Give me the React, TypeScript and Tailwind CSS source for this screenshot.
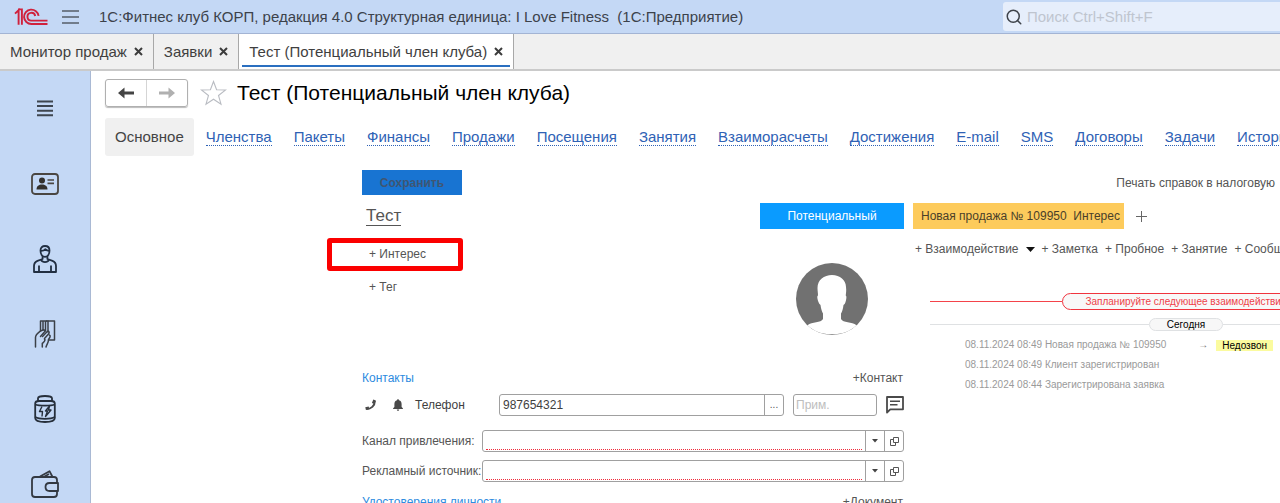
import type { ReactNode } from "react";
import { Search } from "lucide-react";

interface Tab {
  title: string;
  active?: boolean;
}

interface HistoryEntry {
  date: string;
  text: string;
  status?: string;
}

const tabs: Tab[] = [
  { title: "Монитор продаж" },
  { title: "Заявки" },
  { title: "Тест (Потенциальный член клуба)", active: true },
];

const links = [
  "Членства",
  "Пакеты",
  "Финансы",
  "Продажи",
  "Посещения",
  "Занятия",
  "Взаиморасчеты",
  "Достижения",
  "E-mail",
  "SMS",
  "Договоры",
  "Задачи",
  "История",
];

const actions = ["+ Заметка", "+ Пробное", "+ Занятие", "+ Сообщение"];

const history: HistoryEntry[] = [
  { date: "08.11.2024 08:49", text: "Новая продажа № 109950", status: "Недозвон" },
  { date: "08.11.2024 08:49", text: "Клиент зарегистрирован" },
  { date: "08.11.2024 08:44", text: "Зарегистрирована заявка" },
];

const Logo = () => (
  <svg width="34" height="18" viewBox="0 0 34 18" fill="none" stroke="#d0213c" strokeWidth="1.9">
    <path d="M1 5.6 4.6 2.2V16.8" />
    <path d="M4 1.4H7.9V16.8" />
    <path d="M24.6 7.8A7.3 7.2 0 1 0 17.4 16H33.5" />
    <path d="M21.2 8A3.9 3.9 0 1 0 17.4 12.6H33.5" />
  </svg>
);

const Cross = () => (
  <svg width="9" height="9" viewBox="0 0 9 9" stroke="#3c3c3c" strokeWidth="2">
    <path d="M1 1 8 8M8 1 1 8" />
  </svg>
);

const Arrow = ({ className }: { className: string }) => (
  <svg width="16" height="12" viewBox="0 0 16 12" className={className} fill="currentColor">
    <path d="M0 6 6.5 0.5V4.6H16V7.4H6.5V11.5Z" />
  </svg>
);

const Star = () => (
  <svg width="27" height="26" viewBox="0 0 27 26" fill="#fff" stroke="#b9bcc2" strokeWidth="1.1">
    <path d="M13.5 1.5 16.6 9.7 25.6 10 18.5 15.5 21 24.2 13.5 19.2 6 24.2 8.5 15.5 1.4 10 10.4 9.7Z" />
  </svg>
);

const sections: { label: string; icon: ReactNode }[] = [
  {
    label: "Меню разделов",
    icon: (
      <svg width="16" height="17" viewBox="0 0 16 17" stroke="#3f464f" strokeWidth="2">
        <path d="M0 1.5H16M0 6H16M0 10.7H16M0 15.3H16" />
      </svg>
    ),
  },
  {
    label: "Карточки",
    icon: (
      <svg width="28" height="22" viewBox="0 0 28 22" fill="none" stroke="#4a4642" strokeWidth="1.8">
        <rect x="1" y="1" width="26" height="20" rx="3" />
        <circle cx="11" cy="7.5" r="3" fill="#33302d" stroke="none" />
        <path d="M5.5 16.5C5.5 13 8 11.6 11 11.6S16.5 13 16.5 16.5Z" fill="#33302d" stroke="none" />
        <path d="M16.5 7H23M16.5 10.4H23" strokeWidth="1.6" />
      </svg>
    ),
  },
  {
    label: "Клиенты",
    icon: (
      <svg width="24" height="28" viewBox="0 0 24 28" fill="none" stroke="#222f42" strokeWidth="1.8" strokeLinejoin="round">
        <path d="M7.5 5.5C7.5 2.6 9.3 1 12 1S16.5 2.6 16.5 5.5C16.5 9 14.8 11.8 12 11.8S7.5 9 7.5 5.5Z" />
        <path d="M7.6 5.8C10 5.9 11.4 5.3 12.2 4.2C13.4 5.4 14.8 5.8 16.4 5.8" />
        <path d="M9.6 11V14L4.5 15.8C2 16.8 1 18.5 1 21V27H23V21C23 18.5 22 16.8 19.5 15.8L14.4 14V11" />
        <path d="M8 14.8C9.5 17.8 14.5 17.8 16 14.8M6 20.5V27M18 20.5V27" />
      </svg>
    ),
  },
  {
    label: "Продажи",
    icon: (
      <svg width="22" height="28" viewBox="0 0 22 28" fill="none" stroke="#3b4048" strokeWidth="1.5" strokeLinecap="round" strokeLinejoin="round">
        <path d="M12.5 1H20.5V20H15" />
        <path d="M6.5 1V11M9 1V10M11.5 1V11M14 1V12M6.5 1H12.5" />
        <path d="M1.5 27V17.5C1.5 14.5 3.5 13.3 6.5 11L9.5 9.8C11.5 9.8 11.2 11.6 10 12.5L6.5 16.5" />
        <path d="M8.5 16.5 13.5 11.3C15.5 11 15.5 13 14.5 14L10.5 18.5C12 21 10 22 8.3 23.4V27" />
        <path d="M15.3 15C17 15.5 16 17.5 14.5 19.5C14.5 23 12.8 24 12 27" />
      </svg>
    ),
  },
  {
    label: "Товары",
    icon: (
      <svg width="22" height="28" viewBox="0 0 22 28" fill="none" stroke="#262f3b" strokeWidth="1.8" strokeLinejoin="round">
        <path d="M4 6V3.2C4 2 7 1 11 1S18 2 18 3.2V6" />
        <path d="M1.2 8.5C1.2 6.7 3 6 5 6H17C19 6 20.8 6.7 20.8 8.5V23C20.8 25.5 17 27 11 27S1.2 25.5 1.2 23Z" />
        <path d="M1.2 9.5C5 11 17 11 20.8 9.5M1.2 22C5 24.4 17 24.4 20.8 22" />
        <path d="M8 11.5 5.5 16.5H8.5L8 21.5M15.5 11 11.5 16H13.5L11.5 21.5 17 15H14.5Z" strokeWidth="1.4" />
      </svg>
    ),
  },
  {
    label: "Касса",
    icon: (
      <svg width="28" height="28" viewBox="0 0 28 28" fill="none" stroke="#333942" strokeWidth="1.8" strokeLinejoin="round">
        <path d="M26 13V10C26 8 25 7 23 7H4C2 7 1 8 1 10V24C1 26 2 27 4 27H23C25 27 26 26 26 24V21" />
        <path d="M9 6.5 18.5 1.2 21.3 6.5M13.5 6.5 18 4" />
        <path d="M27 13H18.5C16 13 14.5 14.6 14.5 17S16 21 18.5 21H27Z" />
      </svg>
    ),
  },
];

const Avatar = () => (
  <svg width="72" height="72" viewBox="0 0 72 72">
    <circle cx="36" cy="36" r="36" fill="#717171" />
    <path
      d="M36 12C28 12 21.5 17 21.5 25C21.5 28 22 30 22 32.5C20.8 33 21.3 36 22.5 39C23 41 24 41.5 24.5 42C25 46 26 48.5 27 50.5V56C25 60 16 58.5 11.5 62.2C18 68.5 26.5 71.3 36 71.3S54 68.5 60.5 62.2C56 58.5 47 60 45 56V50.5C46.2 48.5 47 46 47.5 42C48.3 41.5 49 41 49.5 39C50.5 36 50.8 33 49.7 32.5C50 30 50.5 28 50 24C50 17 44 12 36 12Z"
      fill="#fff"
    />
  </svg>
);

const Handset = () => (
  <svg width="12" height="12" viewBox="0 0 12 12" fill="none" stroke="#4a4a4a">
    <path d="M1.5 10C6 10 9.8 7 9.8 2" strokeWidth="2" />
    <path d="M0.6 9.6 4 8.8M8.2 4.6 9.6 1" strokeWidth="2.8" />
  </svg>
);

const BellIcon = () => (
  <svg width="10" height="12" viewBox="0 0 10 12" fill="#4a4a4a">
    <path d="M5 0.2C5.6 0.2 6 0.6 6 1.3C7.8 1.8 8.6 3.2 8.6 5V8L9.9 9.3V9.9H0.1V9.3L1.4 8V5C1.4 3.2 2.2 1.8 4 1.3C4 0.6 4.4 0.2 5 0.2Z" />
    <path d="M3.8 10.5H6.2C6.2 11.3 5.7 11.8 5 11.8S3.8 11.3 3.8 10.5Z" />
  </svg>
);

const MessageIcon = () => (
  <svg width="18" height="18" viewBox="0 0 18 18" fill="none" stroke="#4a4a4a" strokeWidth="1.8">
    <path d="M1 1H17V13.3H4.3L1 16.5Z" strokeLinejoin="round" />
    <path d="M4 5.2H14M4 8.8H11.5" strokeWidth="1.6" />
  </svg>
);

const Caret = () => (
  <svg width="6" height="4" viewBox="0 0 6 4" fill="#444">
    <path d="M0 0H6L3 3.5Z" />
  </svg>
);

const OpenIcon = () => (
  <svg width="9" height="9" viewBox="0 0 9 9" fill="none" stroke="#555">
    <path d="M3.5 0.5H8.5V5.5H3.5Z" />
    <path d="M3.5 2.5H0.5V8.5H5.5V5.5" />
  </svg>
);

const SelectField = ({ id, label }: { id: string; label: string }) => (
  <div className="flex h-[22px] items-center">
    <label htmlFor={id} className="w-[120px] shrink-0 whitespace-nowrap">
      {label}
    </label>
    <div className="flex h-full flex-1 rounded-[3px] border border-[#a0a0a0] bg-white">
      <div className="flex flex-1 px-[3px] pb-px">
        <input id={id} className="w-full border-b border-dotted border-[#f02a3a] outline-none" />
      </div>
      <button
        type="button"
        aria-label="Выбрать"
        className="flex w-[19px] items-center justify-center border-l border-[#a0a0a0]"
      >
        <Caret />
      </button>
      <button
        type="button"
        aria-label="Открыть"
        className="flex w-[19px] items-center justify-center border-l border-[#a0a0a0]"
      >
        <OpenIcon />
      </button>
    </div>
  </div>
);

const Header = () => (
  <header className="flex h-[34px] shrink-0 items-center border-b border-[#a3b4d4] bg-[#c4d8f5] pl-3.5">
    <Logo />
    <button aria-label="Меню" className="ml-3.5">
      <svg width="17" height="14" viewBox="0 0 17 14" stroke="#565d68" strokeWidth="1.4">
        <path d="M0 1H17M0 7H17M0 13H17" />
      </svg>
    </button>
    <h1 className="ml-5 flex-1 whitespace-pre text-[15px] text-[#3c424b]">
      {"1С:Фитнес клуб КОРП, редакция 4.0 Структурная единица: I Love Fitness  (1С:Предприятие)"}
    </h1>
    <div className="flex h-[29px] w-[277px] items-center rounded-l-[3px] bg-[#e6eefb] pl-0.5">
      <Search size={18} strokeWidth={2} color="#3e434a" />
      <input
        aria-label="Поиск"
        placeholder="Поиск Ctrl+Shift+F"
        className="ml-1 min-w-0 flex-1 bg-transparent text-[15px] outline-none placeholder:text-[#bfc5cf]"
      />
    </div>
  </header>
);

const TabBar = () => (
  <div className="flex h-[37px] shrink-0 border-b-2 border-[#cacaca] bg-[#f0f0f0] text-[15px] text-[#3f3f3f]">
    {tabs.map((tab) => (
      <div
        key={tab.title}
        className={`flex border-r border-[#a8a8a8] ${tab.active ? "bg-white px-[3px] pb-0.5" : "px-[3px]"}`}
      >
        <div
          className={`flex items-center gap-[7px] px-[7px] ${tab.active ? "border-b-2 border-[#2a6fc0] pt-1" : ""}`}
        >
          <button className="whitespace-nowrap">{tab.title}</button>
          <button aria-label="Закрыть">
            <Cross />
          </button>
        </div>
      </div>
    ))}
  </div>
);

const ClientForm = () => (
  <form className="w-[542px] shrink-0">
    <button type="button" className="block h-[25px] w-[100px] bg-[#1874d2] font-bold text-[#3f5673]">
      Сохранить
    </button>

    <div className="mt-2 flex h-[26px] items-center justify-between">
      <a href="#name" className="ml-1 border-b border-[#555] text-[17px] leading-[18px] text-[#555]">
        Тест
      </a>
      <button type="button" className="h-full w-[144px] bg-[#0a9bff] text-white">
        Потенциальный
      </button>
    </div>

    <div className="flex h-[139px] items-start justify-between pr-9">
      <div className="flex flex-col items-start gap-[13px] pt-[15px] pl-[7px]">
        <div className="relative">
          <button type="button" className="block leading-5">+ Интерес</button>
          <span className="pointer-events-none absolute -top-[6px] -left-[42px] h-[33px] w-[136px] rounded-[3px] border-[5px] border-[#fb0000]" />
        </div>
        <button type="button" className="leading-5">+ Тег</button>
      </div>
      <div className="pt-[34px]">
        <Avatar />
      </div>
    </div>

    <div className="flex h-5 items-center justify-between">
      <h3 className="text-[#2d8be0]">Контакты</h3>
      <button type="button" className="pr-px">+Контакт</button>
    </div>

    <div className="mt-1.5 flex h-[22px] items-center">
      <div className="flex w-[137px] items-center pl-[3px]">
        <Handset />
        <span className="ml-4">
          <BellIcon />
        </span>
        <label htmlFor="phone" className="ml-3 text-[#3f3f3f]">
          Телефон
        </label>
      </div>
      <div className="flex h-full flex-1 rounded-[3px] border border-[#a0a0a0]">
        <input id="phone" defaultValue="987654321" className="min-w-0 flex-1 px-[3px] text-[#3f3f3f] outline-none" />
        <button type="button" className="w-[19px] border-l border-[#a0a0a0] text-[10px]">
          ...
        </button>
      </div>
      <input
        aria-label="Примечание"
        placeholder="Прим."
        className="mx-[9px] h-full w-[84px] rounded-[3px] border border-[#a0a0a0] px-0.5 outline-none placeholder:text-[#bdbdbd]"
      />
      <button type="button" aria-label="Сообщение">
        <MessageIcon />
      </button>
    </div>

    <div className="mt-3.5 flex flex-col gap-2">
      <SelectField id="channel" label="Канал привлечения:" />
      <SelectField id="source" label="Рекламный источник:" />
    </div>

    <div className="mt-2.5 flex h-5 items-center justify-between">
      <h3 className="text-[#2d8be0]">Удостоверения личности</h3>
      <button type="button" className="pr-px">+Документ</button>
    </div>
  </form>
);

const Timeline = () => (
  <div className="mt-[34px] ml-[17px] w-[512px] text-[10px]">
    <div className="flex items-center">
      <span className="h-px flex-1 bg-[#f4434a]" />
      <button className="h-[17px] w-[248px] rounded-full border border-[#f0343e] bg-[#f8f8f8] text-[#ee3f48]">
        Запланируйте следующее взаимодействие
      </button>
      <span className="h-px flex-1 bg-[#f4434a]" />
    </div>
    <div className="mt-2 flex items-center">
      <span className="h-px flex-1 bg-[#dfe1e3]" />
      <span className="h-[13px] w-[74px] rounded-full border border-[#dfe1e3] bg-[#f7f7f7] text-center leading-[11px] text-black">
        Сегодня
      </span>
      <span className="h-px flex-1 bg-[#dfe1e3]" />
    </div>
    <ul className="mt-1 pl-[35px] text-[#9a9a9a]">
      {history.map((entry) => (
        <li key={entry.text} className="flex h-5 items-center">
          <span>
            {entry.date} {entry.text}
          </span>
          {entry.status && (
            <>
              <span className="ml-8 text-[#777]">→</span>
              <span className="ml-2 bg-[#fbfb9f] px-1.5 leading-[11px] text-black">{entry.status}</span>
            </>
          )}
        </li>
      ))}
    </ul>
  </div>
);

const SalesPanel = () => (
  <section className="min-w-0 flex-1 overflow-hidden whitespace-nowrap">
    <div className="flex h-[25px] items-center justify-end pr-[5px]">
      <button>Печать справок в налоговую</button>
    </div>
    <div className="mt-2 flex h-[26px] items-center">
      <button className="h-full w-[211px] bg-[#fdcb5c] pl-1 whitespace-pre text-[#4a3f2a]">
        {"Новая продажа № 109950  Интерес"}
      </button>
      <button aria-label="Добавить" className="ml-3">
        <svg width="11" height="11" viewBox="0 0 11 11" stroke="#666">
          <path d="M5.5 0V11M0 5.5H11" />
        </svg>
      </button>
    </div>
    <div className="mt-2.5 flex h-5 items-center gap-[7px] pl-0.5">
      <button className="flex items-center gap-[7px]">
        + Взаимодействие
        <svg width="9" height="5" viewBox="0 0 9 5" fill="#111">
          <path d="M0 0H9L4.5 5Z" />
        </svg>
      </button>
      {actions.map((action) => (
        <button key={action}>{action}</button>
      ))}
    </div>
    <Timeline />
  </section>
);

export default function App() {
  return (
    <div className="flex h-screen flex-col overflow-hidden bg-white font-['Liberation_Sans',Arial,sans-serif] text-xs text-[#555]">
      <Header />
      <TabBar />
      <div className="flex min-h-0 flex-1">
        <nav className="flex w-[91px] shrink-0 flex-col overflow-hidden border-r border-[#a9b9d4] bg-[#c4d8f5]">
          {sections.map((section) => (
            <button
              key={section.label}
              aria-label={section.label}
              className="flex h-[75px] shrink-0 items-center justify-center"
            >
              {section.icon}
            </button>
          ))}
        </nav>

        <main className="min-w-0 flex-1 overflow-hidden pt-2 pl-3.5">
          <div className="flex h-7 items-center">
            <div className="flex h-full w-[83px] rounded-[3px] border border-[#b0b0b0] shadow-[0_1px_1px_#bbb]">
              <button aria-label="Назад" className="flex flex-1 items-center justify-center border-r border-[#d5d5d5]">
                <Arrow className="text-[#444]" />
              </button>
              <button aria-label="Вперед" className="flex flex-1 items-center justify-center">
                <Arrow className="rotate-180 text-[#b0b0b0]" />
              </button>
            </div>
            <button aria-label="В избранное" className="ml-3">
              <Star />
            </button>
            <h2 className="ml-2.5 whitespace-nowrap text-[21px] text-black">Тест (Потенциальный член клуба)</h2>
          </div>

          <div className="mt-[11px] flex h-[38px] items-center gap-[22px] whitespace-nowrap text-[15px] text-[#2f62b5]">
            <a href="#main" className="-mr-2.5 flex h-full items-center rounded-[3px] bg-[#f0f0f0] px-2.5 text-[#444]">
              Основное
            </a>
            {links.map((link) => (
              <a key={link} href="#section" className="border-b border-dotted border-[#2f62b5] leading-4">
                {link}
              </a>
            ))}
          </div>

          <div className="mt-3.5 flex gap-[9px] pl-[257px]">
            <ClientForm />
            <SalesPanel />
          </div>
        </main>
      </div>
    </div>
  );
}
